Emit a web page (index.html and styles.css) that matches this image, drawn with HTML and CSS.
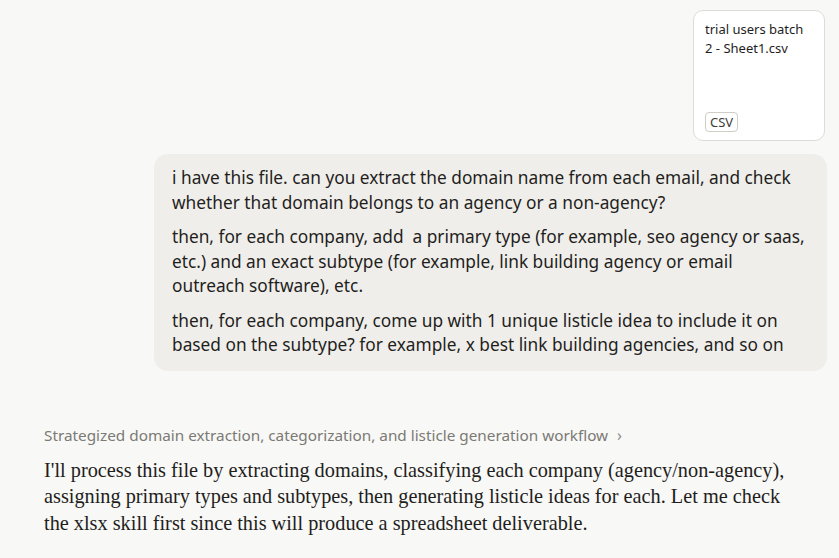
FILE: index.html
```html
<!DOCTYPE html>
<html>
<head>
<meta charset="utf-8">
<link rel="stylesheet" href="styles.css">
</head>
<body>
<div class="page">
  <div class="user-turn">
    <div class="file-card">
      <div class="file-name">trial users batch 2 - Sheet1.csv</div>
      <span class="file-badge">CSV</span>
    </div>
    <div class="bubble">
      <p>i have this file. can you extract the domain name from each email, and check whether that domain belongs to an agency or a non-agency?</p>
      <p>then, for each company, add &nbsp;a primary type (for example, seo agency or saas, etc.) and an exact subtype (for example, link building agency or email<br>outreach software), etc.</p>
      <p>then, for each company, come up with 1 unique listicle idea to include it on based on the subtype? for example, x best link building agencies, and so on</p>
    </div>
  </div>
  <div class="assistant-turn">
    <div class="thinking">Strategized domain extraction, categorization, and listicle generation workflow <span class="chev">&#8250;</span></div>
    <p class="answer">I'll process this file by extracting domains, classifying each company (agency/non-agency), assigning primary types and subtypes, then generating listicle ideas for each. Let me check the xlsx skill first since this will produce a spreadsheet deliverable.</p>
  </div>
</div>
</body>
</html>
```
FILE: styles.css
```css
html, body {
  margin: 0;
  padding: 0;
  background: #f8f8f6;
}
.page {
  width: 839px;
  height: 558px;
  overflow: hidden;
  box-sizing: border-box;
  padding: 10px 12px 0 44px;
}
.user-turn {
  display: flex;
  flex-direction: column;
  align-items: flex-end;
  gap: 13px;
}
.file-card {
  width: 132px;
  height: 131px;
  box-sizing: border-box;
  background: #ffffff;
  border: 1px solid #dedcd6;
  border-radius: 10px;
  margin-right: 2px;
  padding: 9px 11px 8px 11px;
  display: flex;
  flex-direction: column;
  justify-content: space-between;
  align-items: flex-start;
  font-family: "Noto Sans", sans-serif;
}
.file-name {
  font-size: 13px;
  line-height: 19px;
  color: #1f1e1d;
}
.file-badge {
  font-size: 13px;
  line-height: 18px;
  color: #3d3d3a;
  border: 1px solid #cfcdc6;
  border-radius: 4px;
  padding: 0 4px;
  background: #fff;
}
.bubble {
  width: 673px;
  box-sizing: border-box;
  background: #f0eeea;
  border-radius: 14px;
  padding: 12px 18px 13px 18px;
  font-family: "Noto Sans", sans-serif;
  font-size: 17.3px;
  line-height: 24.5px;
  color: #1f1e1d;
}
.bubble p {
  margin: 0 0 10px 0;
}
.bubble p:last-child {
  margin-bottom: 0;
}
.assistant-turn {
  margin-top: 54px;
}
.thinking {
  font-family: "Noto Sans", sans-serif;
  font-size: 15.3px;
  line-height: 20px;
  color: #7b7a75;
}
.chev {
  margin-left: 5px;
  font-size: 16px;
  color: #8a8984;
}
.answer {
  margin: 12px 0 0 0;
  padding-right: 36px;
  font-family: "Liberation Serif", serif;
  font-size: 20.3px;
  line-height: 26.5px;
  color: #1f1e1d;
}
```
